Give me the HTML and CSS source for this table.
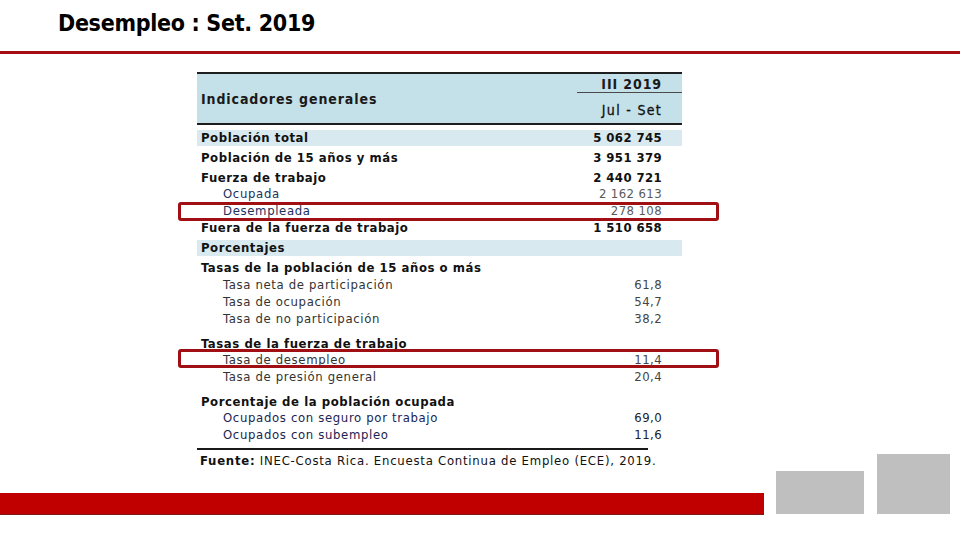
FILE: index.html
```html
<!DOCTYPE html>
<html lang="es">
<head>
<meta charset="utf-8">
<title>Desempleo : Set. 2019</title>
<link rel="stylesheet" href="styles.css">
</head>
<body>
<header class="title-bar">
  <h1 class="title">Desempleo : Set. 2019</h1>
</header>
<main class="stage">
  <section class="table">
    <div class="thead">
      <div class="th-label">Indicadores generales</div>
      <div class="th-period">
        <div class="th-q">III 2019</div>
        <div class="th-m">Jul - Set</div>
      </div>
    </div>
    <div class="row main shade first"><span class="lbl">Población total</span><span class="num">5 062 745</span></div>
    <div class="row main"><span class="lbl">Población de 15 años y más</span><span class="num">3 951 379</span></div>
    <div class="row main"><span class="lbl">Fuerza de trabajo</span><span class="num">2 440 721</span></div>
    <div class="row sub navy tight"><span class="lbl">Ocupada</span><span class="num">2 162 613</span></div>
    <div class="row sub navy mark mark-a"><span class="lbl">Desempleada</span><span class="num">278 108</span></div>
    <div class="row main after-sub"><span class="lbl">Fuera de la fuerza de trabajo</span><span class="num">1 510 658</span></div>
    <div class="row main shade"><span class="lbl">Porcentajes</span><span class="num"></span></div>
    <div class="row main"><span class="lbl">Tasas de la población de 15 años o más</span><span class="num"></span></div>
    <div class="row sub"><span class="lbl">Tasa neta de participación</span><span class="num">61,8</span></div>
    <div class="row sub"><span class="lbl">Tasa de ocupación</span><span class="num">54,7</span></div>
    <div class="row sub"><span class="lbl">Tasa de no participación</span><span class="num">38,2</span></div>
    <div class="row main group"><span class="lbl">Tasas de la fuerza de trabajo</span><span class="num"></span></div>
    <div class="row sub tight mark mark-b"><span class="lbl">Tasa de desempleo</span><span class="num">11,4</span></div>
    <div class="row sub"><span class="lbl">Tasa de presión general</span><span class="num">20,4</span></div>
    <div class="row main group"><span class="lbl">Porcentaje de la población ocupada</span><span class="num"></span></div>
    <div class="row sub navy strong tight"><span class="lbl">Ocupados con seguro por trabajo</span><span class="num">69,0</span></div>
    <div class="row sub navy strong"><span class="lbl">Ocupados con subempleo</span><span class="num">11,6</span></div>
    <div class="rule"></div>
    <p class="source"><b>Fuente:</b> INEC-Costa Rica. Encuesta Continua de Empleo (ECE), 2019.</p>
  </section>
</main>
<footer class="footer">
  <div class="red-bar"></div>
  <div class="gray-box small"></div>
  <div class="gray-box tall"></div>
</footer>
</body>
</html>
```

FILE: styles.css
```css
* { box-sizing: border-box; }

html, body {
  margin: 0;
  padding: 0;
  width: 960px;
  height: 540px;
  background: #ffffff;
  overflow: hidden;
}

body {
  display: flex;
  flex-direction: column;
  font-family: "DejaVu Sans Condensed", "DejaVu Sans", sans-serif;
}

.title-bar {
  flex: 0 0 54px;
  height: 54px;
  border-bottom: 3px solid #a50f12;
  padding-left: 58px;
}

.title {
  margin: 0;
  padding-top: 8px;
  font-family: "DejaVu Sans Condensed", "DejaVu Sans", sans-serif;
  font-weight: bold;
  font-size: 23px;
  line-height: 30px;
  letter-spacing: -0.3px;
  color: #000;
}

.stage {
  flex: 0 0 auto;
  padding-left: 197px;
  padding-top: 18px;
}

.table {
  width: 485px;
  position: relative;
}

.thead {
  display: flex;
  height: 53px;
  border-top: 2px solid #1e1e1e;
  border-bottom: 2px solid #1e1e1e;
  background: #c4e0e9;
}

.th-label {
  flex: 1;
  display: flex;
  align-items: center;
  padding-left: 4px;
  font-weight: bold;
  font-size: 14px;
  color: #1a1a1a;
  letter-spacing: 0.9px;
}

.th-period {
  width: 105px;
  display: flex;
  flex-direction: column;
  text-align: right;
}

.th-q {
  height: 19px;
  line-height: 20px;
  border-bottom: 1px solid #4a4a4a;
  padding-right: 20px;
  font-weight: bold;
  font-size: 14px;
  color: #1a1a1a;
  letter-spacing: 0.9px;
}

.th-m {
  flex: 1;
  display: flex;
  align-items: center;
  justify-content: flex-end;
  padding-right: 20px;
  padding-top: 3px;
  font-size: 14px;
  color: #111;
  letter-spacing: 1.3px;
  -webkit-text-stroke: 0.3px #111;
}

.row {
  position: relative;
  display: flex;
  justify-content: space-between;
  align-items: center;
  height: 16px;
  font-size: 13px;
  line-height: 16px;
}

.row.main {
  margin-top: 4px;
  font-weight: bold;
  color: #111;
  letter-spacing: 0.55px;
}

.row.main.first { margin-top: 5px; }

.row.main.after-sub { margin-top: 1px; }

.row.sub {
  margin-top: 1px;
  color: #333;
  letter-spacing: 0.65px;
}

.row.tight { margin-top: 0; }

.row.group { margin-top: 9px; }

.row.shade { background: #d8e9ef; }

.row .lbl { padding-left: 4px; }

.row.sub .lbl { padding-left: 26px; }

.row .num { padding-right: 20px; letter-spacing: 0.4px; }

.row.sub .num { color: #444; }

.row.navy .lbl { color: #22305e; }

.row.navy .num { color: #5a5a5a; }

.row.strong .lbl { color: #1b2452; }

.row.strong .num { color: #222; }

.row.mark::after {
  content: "";
  position: absolute;
  left: -19px;
  right: -37px;
  border: 3px solid #a00f14;
  border-radius: 3px;
}

.row.mark-a::after { top: -1px; bottom: -2px; }

.row.mark-b::after { top: -3px; bottom: 0; }

.rule {
  width: 451px;
  height: 2px;
  margin-top: 5px;
  background: #1a1a1a;
}

.source {
  margin: 3px 0 0 0;
  padding-left: 3px;
  height: 16px;
  line-height: 16px;
  font-size: 13px;
  letter-spacing: 0.75px;
  color: #111;
}

.source b { font-weight: bold; }

.footer {
  flex: 0 0 85px;
  height: 85px;
  margin-top: -15px;
  padding-bottom: 25px;
  display: flex;
  align-items: flex-end;
}

.red-bar {
  width: 764px;
  height: 21px;
  background: #c00000;
  box-shadow: 0 1px 0 #7a1a1a;
}

.gray-box { background: #bfbfbf; }

.gray-box.small {
  width: 88px;
  height: 43px;
  margin-left: 12px;
}

.gray-box.tall {
  width: 73px;
  height: 60px;
  margin-left: 13px;
}
```
